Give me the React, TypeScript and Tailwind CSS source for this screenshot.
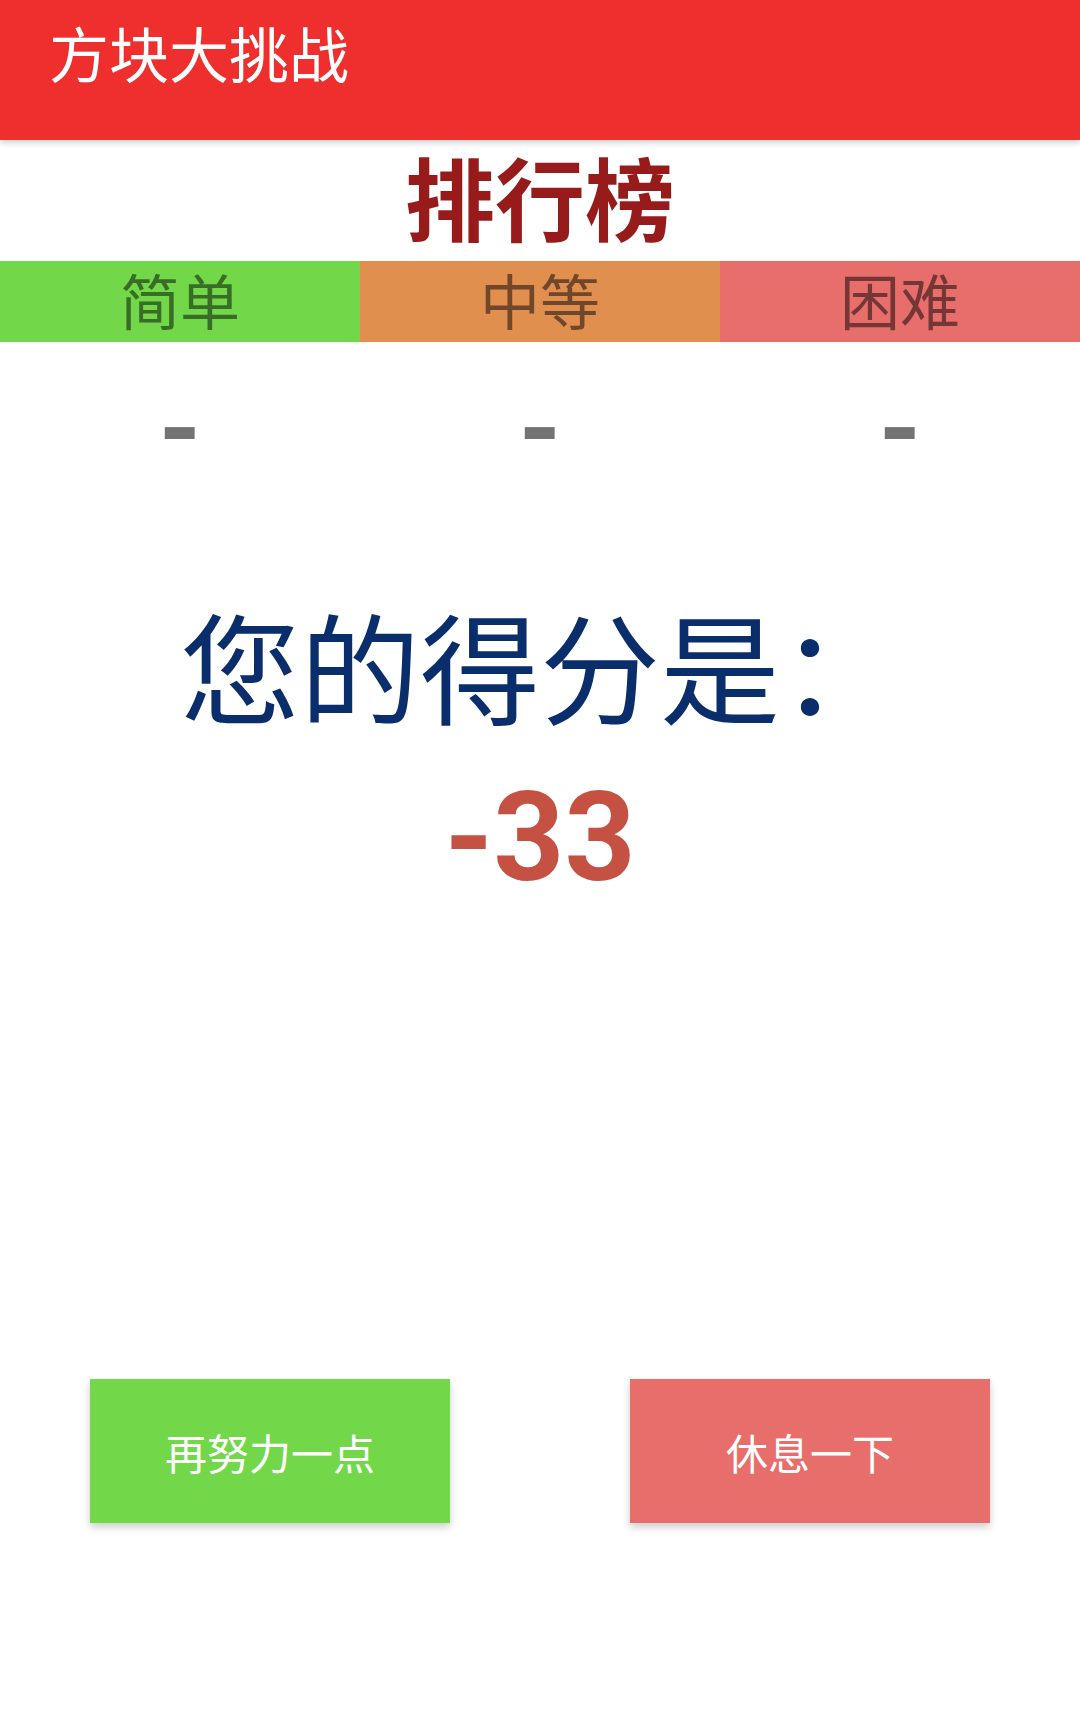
const cjk = { fontFamily: '"Noto Sans CJK SC", "Noto Sans", sans-serif' };
const num = { fontFamily: 'Roboto, "Noto Sans CJK SC", sans-serif' };

const tabs = [
  { label: '简单', bg: 'bg-[#72d84a]', fg: 'text-[#396c25]' },
  { label: '中等', bg: 'bg-[#e08f4f]', fg: 'text-[#70472a]' },
  { label: '困难', bg: 'bg-[#e86e6c]', fg: 'text-[#743736]' },
];

export default function App() {
  return (
    <div className="w-[1080px] h-[1720px] bg-white overflow-hidden" style={cjk}>
      {/* toolbar */}
      <div className="relative z-10 h-[140px] bg-[#ef2e2e] pl-[49px] pt-[22px] shadow-[0_3px_6px_rgba(0,0,0,0.18)]">
        <h1 className="text-[60px] leading-[60px] text-white">方块大挑战</h1>
      </div>

      <div className="h-[121px] flex items-center justify-center pb-[12px]">
        <h2 className="text-[90px] leading-[90px] font-bold text-[#981b1b]">排行榜</h2>
      </div>

      <div className="grid grid-cols-3 h-[81px]">
        {tabs.map(t => (
          <div key={t.label} className={`${t.bg} ${t.fg} flex items-center justify-center pb-[6px] text-[60px] leading-[60px]`}>
            {t.label}
          </div>
        ))}
      </div>

      <div className="grid grid-cols-3 h-[180px] pt-[33px]" style={num}>
        {tabs.map(t => (
          <div key={t.label} className="text-center text-[108px] leading-[108px] font-bold text-[#737373]">-</div>
        ))}
      </div>

      <div className="flex flex-col items-center">
        <p className="text-[120px] leading-[120px] text-[#0a2d6b] mt-[82px]">您的得分是：</p>
        <p className="text-[124px] leading-[124px] font-bold text-[#c45142] mt-[52px]" style={num}>-33</p>
      </div>

      <div className="flex justify-between px-[90px] mt-[479px]">
        <button className="w-[360px] h-[144px] bg-[#72d84a] text-white text-[42px] shadow-[0_4px_8px_rgba(0,0,0,0.2)]">
          再努力一点
        </button>
        <button className="w-[360px] h-[144px] bg-[#e86e6c] text-white text-[42px] shadow-[0_4px_8px_rgba(0,0,0,0.2)]">
          休息一下
        </button>
      </div>
    </div>
  );
}
